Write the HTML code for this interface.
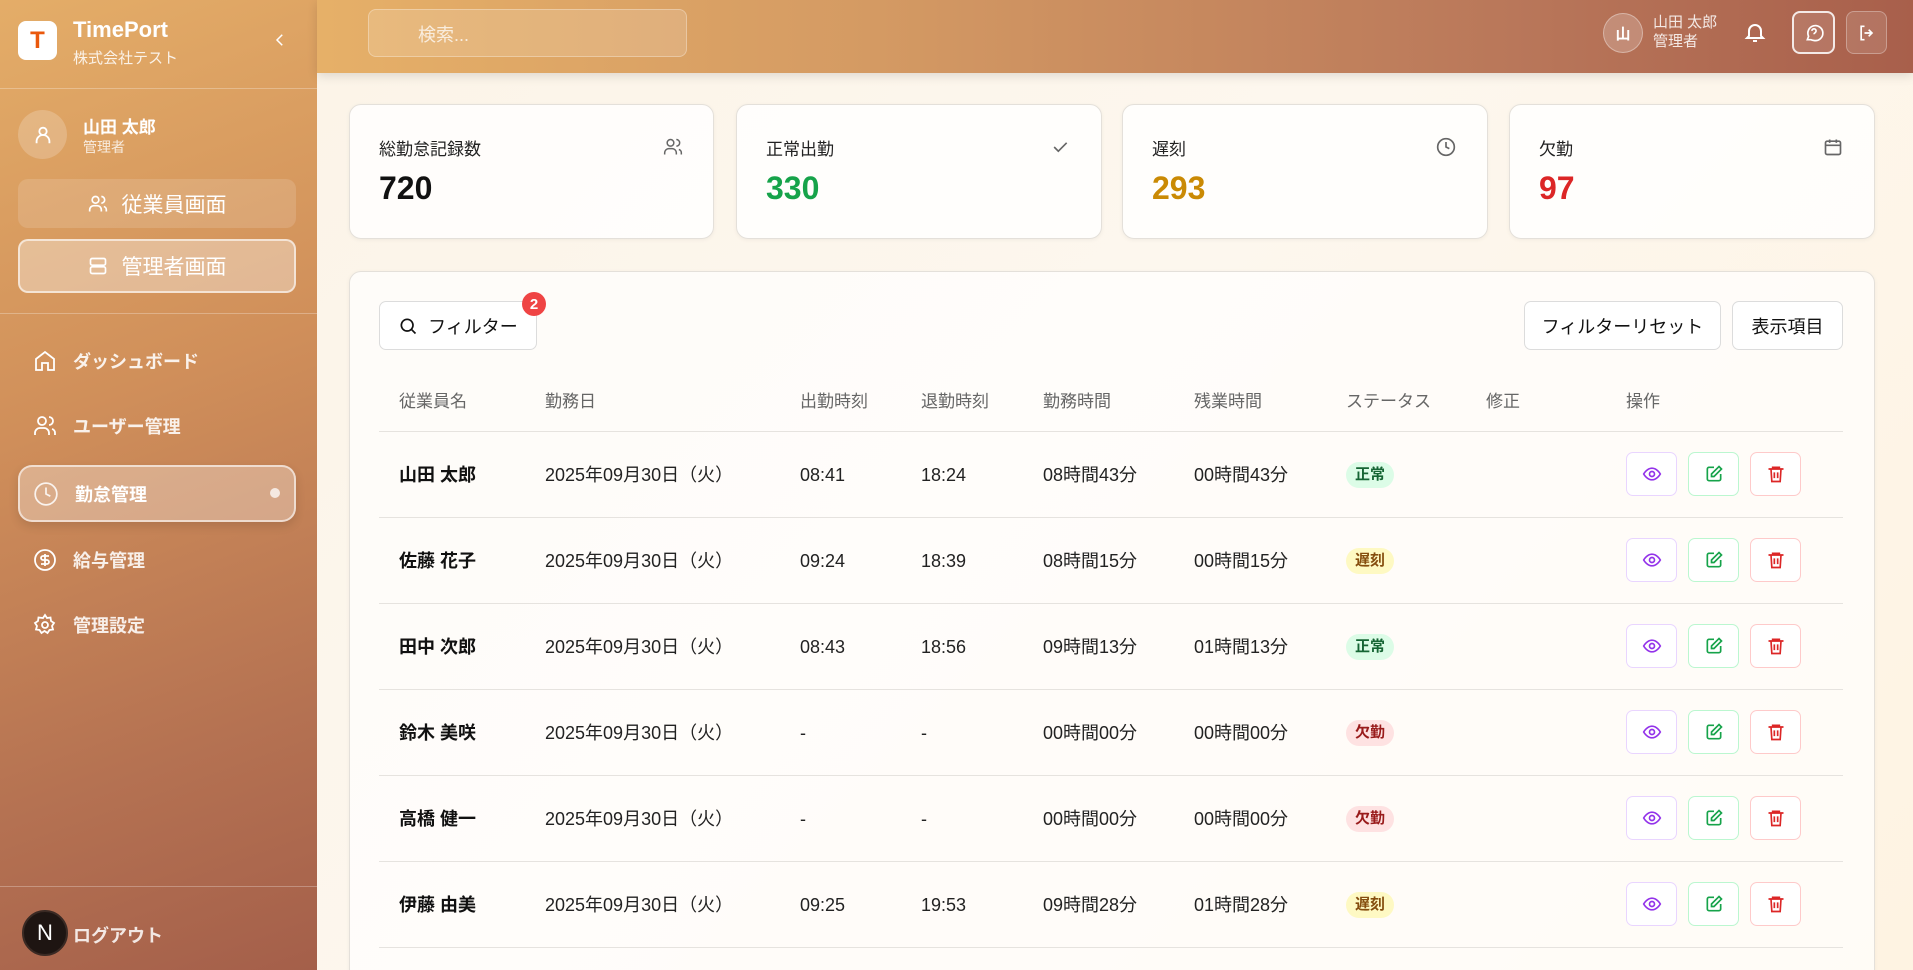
<!DOCTYPE html>
<html style="width:1913px;height:970px;overflow:hidden"><head><meta charset="utf-8"><style>
*{box-sizing:border-box;margin:0;padding:0}
body{width:1913px;height:970px;overflow:hidden;position:relative;font-family:"Liberation Sans","Noto Sans CJK JP",sans-serif;background:linear-gradient(135deg,#fbf3e6,#fdf7ee 50%,#fef3e2);color:#111}
.a{position:absolute}
#clip{position:absolute;left:0;top:0;width:1913px;height:970px;overflow:hidden}
#side{left:0;top:0;width:317px;height:970px;background:linear-gradient(160deg,#e4ad68 0%,#d08f5a 40%,#b57252 75%,#a45f4a 100%);color:#fff;z-index:2}
#head{left:317px;top:0;width:1596px;height:73px;background:linear-gradient(90deg,#e6b068 0%,#d49a63 35%,#b9775a 75%,#a85f4b 100%);box-shadow:0 3px 10px rgba(0,0,0,.12);z-index:2}
.hr{height:1px;background:rgba(255,255,255,.28);left:0;width:317px}
.btn{border-radius:10px;display:flex;align-items:center;justify-content:center;gap:14px;font-size:21px;color:#fff}
.nav{left:33px;display:flex;align-items:center;gap:16px;font-size:18px;font-weight:bold;color:rgba(255,255,255,.88)}
.card{background:rgba(255,255,255,.82);border:1px solid #e4e0da;border-radius:12px;box-shadow:0 1px 4px rgba(0,0,0,.05)}
.lbl{font-size:17px;color:#222}
.val{font-size:32px;font-weight:bold}
.th{top:390px;font-size:17px;color:#666;line-height:24px}
.rowline{left:379px;width:1464px;height:1px;background:#e6e3df}
.cell{font-size:18px;color:#222;line-height:24px;height:24px}
.tag{border-radius:14px;font-size:15px;padding:3px 9px;font-weight:bold;line-height:20px}
.ab{width:51px;height:44px;border-radius:7px;background:#fff;display:flex;align-items:center;justify-content:center}
.wb{background:#fff;border:1px solid #dcdcdc;border-radius:7px;font-size:18px;display:flex;align-items:center;justify-content:center;color:#111}
</style></head><body><div id="clip">
<div id="side" class="a">
 <div class="a" style="left:18px;top:21px;width:39px;height:39px;background:#fff;border-radius:8px;color:#ea580c;font-weight:bold;font-size:24px;display:flex;align-items:center;justify-content:center">T</div>
 <div class="a" style="left:73px;top:17px;font-size:22px;font-weight:bold">TimePort</div>
 <div class="a" style="left:73px;top:47px;font-size:15px;color:rgba(255,255,255,.85)">株式会社テスト</div>
 <svg class="a" style="left:271px;top:31px" width="18" height="18" viewBox="0 0 24 24" fill="none" stroke="#fff" stroke-width="2"><path d="M15 5l-7 7 7 7"/></svg>
 <div class="a hr" style="top:88px"></div>
 <div class="a" style="left:18px;top:110px;width:49px;height:49px;border-radius:50%;background:rgba(255,255,255,.2);display:flex;align-items:center;justify-content:center"><svg width="22" height="22" viewBox="0 0 24 24" fill="none" stroke="#fff" stroke-width="2"><circle cx="12" cy="8" r="4"/><path d="M5 21v-2a7 7 0 0114 0v2"/></svg></div>
 <div class="a" style="left:83px;top:113px;font-size:17px;font-weight:bold">山田 太郎</div>
 <div class="a" style="left:83px;top:137px;font-size:14px;color:rgba(255,255,255,.8)">管理者</div>
 <div class="a btn" style="left:18px;top:179px;width:278px;height:49px;background:rgba(255,255,255,.14)"><svg width="20" height="20" viewBox="0 0 24 24" fill="none" stroke="#fff" stroke-width="2"><circle cx="9" cy="7" r="4"/><path d="M2 21v-2a5 5 0 015-5h4a5 5 0 015 5v2M16 3a4 4 0 010 8M22 21v-2a4 4 0 00-3-4"/></svg>従業員画面</div>
 <div class="a btn" style="left:18px;top:239px;width:278px;height:54px;background:rgba(255,255,255,.35);border:2px solid rgba(255,255,255,.6)"><svg width="20" height="20" viewBox="0 0 24 24" fill="none" stroke="#fff" stroke-width="2"><rect x="3" y="3" width="18" height="8" rx="2"/><rect x="3" y="13" width="18" height="8" rx="2"/><path d="M7 7h.01M7 17h.01"/></svg>管理者画面</div>
 <div class="a hr" style="top:313px"></div>
 <div class="a nav" style="top:348px"><svg width="24" height="24" viewBox="0 0 24 24" fill="none" stroke="#fff" stroke-width="1.8"><path d="M3 10l9-7 9 7v11h-6v-7H9v7H3z"/></svg>ダッシュボード</div>
 <div class="a nav" style="top:413px"><svg width="24" height="24" viewBox="0 0 24 24" fill="none" stroke="#fff" stroke-width="1.8"><circle cx="9" cy="7" r="4"/><path d="M2 21v-2a5 5 0 015-5h4a5 5 0 015 5v2M16 3a4 4 0 010 8M22 21v-2a4 4 0 00-3-4"/></svg>ユーザー管理</div>
 <div class="a" style="left:18px;top:465px;width:278px;height:57px;border-radius:14px;background:rgba(255,255,255,.3);border:2px solid rgba(255,255,255,.6);box-shadow:0 4px 10px rgba(0,0,0,.12)"></div>
 <div class="a nav" style="top:481px;color:#fff"><svg width="26" height="26" viewBox="0 0 24 24" fill="none" stroke="rgba(255,255,255,.85)" stroke-width="1.6"><circle cx="12" cy="12" r="10"/><path d="M12 6v6l4 2"/></svg>勤怠管理</div>
 <div class="a" style="left:270px;top:488px;width:10px;height:10px;border-radius:50%;background:rgba(255,255,255,.75)"></div>
 <div class="a nav" style="top:547px"><svg width="24" height="24" viewBox="0 0 24 24" fill="none" stroke="#fff" stroke-width="1.8"><circle cx="12" cy="12" r="10"/><path d="M16 8h-6a2 2 0 000 4h4a2 2 0 010 4H8M12 6v12"/></svg>給与管理</div>
 <div class="a nav" style="top:612px"><svg width="24" height="24" viewBox="0 0 24 24" fill="none" stroke="#fff" stroke-width="1.8"><circle cx="12" cy="12" r="3"/><path d="M12 2l2 3 3.5-.5.5 3.5 3 2-2 3 1 3.5-3.5.5-2 3-3-2-3 2-2-3-3.5-.5 1-3.5-2-3 3-2 .5-3.5L10 5z"/></svg>管理設定</div>
 <div class="a hr" style="top:886px"></div>
 <div class="a" style="left:22px;top:910px;width:46px;height:46px;border-radius:50%;background:#1e1512;border:2px solid #3a2a24;color:#fff;font-size:22px;display:flex;align-items:center;justify-content:center">N</div>
 <div class="a" style="left:73px;top:922px;font-size:18px;font-weight:bold;color:rgba(255,255,255,.85)">ログアウト</div>
</div>
<div id="head" class="a">
 <div class="a" style="left:51px;top:9px;width:319px;height:48px;border-radius:8px;background:rgba(255,255,255,.15);border:1px solid rgba(255,255,255,.3)"></div>
 <div class="a" style="left:101px;top:21px;font-size:18px;color:rgba(255,255,255,.75)">検索...</div>
 <div class="a" style="left:1286px;top:13px;width:40px;height:40px;border-radius:50%;background:rgba(255,255,255,.2);border:1px solid rgba(255,255,255,.35);color:#fff;font-weight:bold;font-size:15px;display:flex;align-items:center;justify-content:center">山</div>
 <div class="a" style="left:1336px;top:13px;font-size:15px;color:rgba(255,255,255,.85);line-height:19px">山田 太郎<br>管理者</div>
 <svg class="a" style="left:1426px;top:20px" width="24" height="24" viewBox="0 0 24 24" fill="none" stroke="#fff" stroke-width="2"><path d="M6 16V11a6 6 0 0112 0v5l2 2H4zM10 21h4"/></svg>
 <div class="a" style="left:1475px;top:11px;width:43px;height:43px;border-radius:8px;border:2px solid rgba(255,255,255,.85);background:rgba(255,255,255,.12);display:flex;align-items:center;justify-content:center"><svg width="20" height="20" viewBox="0 0 24 24" fill="none" stroke="#fff" stroke-width="2"><path d="M4 20l1.5-4A9 9 0 1112 21a9 9 0 01-4-1z"/><path d="M9.5 9.5a2.5 2.5 0 114 2c-1 .6-1.5 1-1.5 2M12 16.5h.01"/></svg></div>
 <div class="a" style="left:1529px;top:11px;width:41px;height:43px;border-radius:8px;border:1px solid rgba(255,255,255,.3);background:rgba(255,255,255,.12);display:flex;align-items:center;justify-content:center"><svg width="20" height="20" viewBox="0 0 24 24" fill="none" stroke="#fff" stroke-width="2"><path d="M9 4H5v16h4M14 8l4 4-4 4M18 12H9"/></svg></div>
</div>

<div class="a card" style="left:349px;top:104px;width:365px;height:135px"></div>
<div class="a card" style="left:736px;top:104px;width:366px;height:135px"></div>
<div class="a card" style="left:1122px;top:104px;width:366px;height:135px"></div>
<div class="a card" style="left:1509px;top:104px;width:366px;height:135px"></div>
<div class="a lbl" style="left:379px;top:135px">総勤怠記録数</div><div class="a val" style="left:379px;top:170px">720</div>
<div class="a lbl" style="left:766px;top:135px">正常出勤</div><div class="a val" style="left:766px;top:170px;color:#16a34a">330</div>
<div class="a lbl" style="left:1152px;top:135px">遅刻</div><div class="a val" style="left:1152px;top:170px;color:#ca8a04">293</div>
<div class="a lbl" style="left:1539px;top:135px">欠勤</div><div class="a val" style="left:1539px;top:170px;color:#dc2626">97</div>
<svg class="a" style="left:663px;top:137px" width="20" height="20" viewBox="0 0 24 24" fill="none" stroke="#666" stroke-width="1.8"><circle cx="9" cy="7" r="4"/><path d="M2 21v-2a5 5 0 015-5h4a5 5 0 015 5v2M16 3a4 4 0 010 8M22 21v-2a4 4 0 00-3-4"/></svg>
<svg class="a" style="left:1050px;top:137px" width="20" height="20" viewBox="0 0 24 24" fill="none" stroke="#666" stroke-width="2"><path d="M5 12l5 5L20 7"/></svg>
<svg class="a" style="left:1436px;top:137px" width="20" height="20" viewBox="0 0 24 24" fill="none" stroke="#666" stroke-width="2"><circle cx="12" cy="12" r="10"/><path d="M12 6v6l4 2"/></svg>
<svg class="a" style="left:1823px;top:137px" width="20" height="20" viewBox="0 0 24 24" fill="none" stroke="#666" stroke-width="2"><rect x="3" y="5" width="18" height="16" rx="2"/><path d="M3 10h18M8 3v4M16 3v4"/></svg>

<div class="a card" style="left:349px;top:271px;width:1526px;height:710px;background:rgba(255,255,255,.7)"></div>
<div class="a wb" style="left:379px;top:301px;width:158px;height:49px;gap:10px"><svg width="20" height="20" viewBox="0 0 24 24" fill="none" stroke="#111" stroke-width="2"><circle cx="11" cy="11" r="7"/><path d="M21 21l-5-5"/></svg>フィルター</div>
<div class="a" style="left:522px;top:292px;width:24px;height:24px;border-radius:50%;background:#ef4444;color:#fff;font-size:15px;font-weight:bold;display:flex;align-items:center;justify-content:center">2</div>
<div class="a wb" style="left:1524px;top:301px;width:197px;height:49px">フィルターリセット</div>
<div class="a wb" style="left:1732px;top:301px;width:111px;height:49px">表示項目</div>

<div class="a th" style="left:399px">従業員名</div>
<div class="a th" style="left:545px">勤務日</div>
<div class="a th" style="left:800px">出勤時刻</div>
<div class="a th" style="left:921px">退勤時刻</div>
<div class="a th" style="left:1043px">勤務時間</div>
<div class="a th" style="left:1194px">残業時間</div>
<div class="a th" style="left:1346px">ステータス</div>
<div class="a th" style="left:1486px">修正</div>
<div class="a th" style="left:1626px">操作</div>
<div class="a rowline" style="top:431px"></div>

<div id="rows"></div>
</div>
<script>
var d=[["山田 太郎","08:41","18:24","08時間43分","00時間43分","正常"],["佐藤 花子","09:24","18:39","08時間15分","00時間15分","遅刻"],["田中 次郎","08:43","18:56","09時間13分","01時間13分","正常"],["鈴木 美咲","-","-","00時間00分","00時間00分","欠勤"],["高橋 健一","-","-","00時間00分","00時間00分","欠勤"],["伊藤 由美","09:25","19:53","09時間28分","01時間28分","遅刻"]];
var st={"正常":"background:#dcfce7;color:#166534","遅刻":"background:#fef9c3;color:#854d0e","欠勤":"background:#fee2e2;color:#991b1b"};
var h="";
d.forEach(function(r,i){var c=475+i*86,t=c-12;
h+='<div class="a cell" style="left:399px;top:'+t+'px;font-weight:bold;color:#111">'+r[0]+'</div>';
h+='<div class="a cell" style="left:545px;top:'+t+'px">2025年09月30日（火）</div>';
h+='<div class="a cell" style="left:800px;top:'+t+'px">'+r[1]+'</div>';
h+='<div class="a cell" style="left:921px;top:'+t+'px">'+r[2]+'</div>';
h+='<div class="a cell" style="left:1043px;top:'+t+'px">'+r[3]+'</div>';
h+='<div class="a cell" style="left:1194px;top:'+t+'px">'+r[4]+'</div>';
h+='<div class="a tag" style="left:1346px;top:'+(c-13)+'px;'+st[r[5]]+'">'+r[5]+'</div>';
h+='<div class="a ab" style="left:1626px;top:'+(c-23)+'px;border:1px solid #e9d5ff"><svg width="20" height="20" viewBox="0 0 24 24" fill="none" stroke="#9333ea" stroke-width="2"><path d="M2 12s4-7 10-7 10 7 10 7-4 7-10 7S2 12 2 12z"/><circle cx="12" cy="12" r="3"/></svg></div>';
h+='<div class="a ab" style="left:1688px;top:'+(c-23)+'px;border:1px solid #bbf7d0"><svg width="20" height="20" viewBox="0 0 24 24" fill="none" stroke="#16a34a" stroke-width="2"><path d="M12 4H6a2 2 0 00-2 2v12a2 2 0 002 2h12a2 2 0 002-2v-6"/><path d="M18 3l3 3-9 9H9v-3z"/></svg></div>';
h+='<div class="a ab" style="left:1750px;top:'+(c-23)+'px;border:1px solid #fecaca"><svg width="20" height="20" viewBox="0 0 24 24" fill="none" stroke="#dc2626" stroke-width="2"><path d="M3 6h18M8 6V4h8v2M6 6l1 15h10l1-15M10 10v7M14 10v7"/></svg></div>';
h+='<div class="a rowline" style="top:'+(c+42)+'px"></div>';});
document.getElementById("rows").innerHTML=h;
</script>
</body></html>
